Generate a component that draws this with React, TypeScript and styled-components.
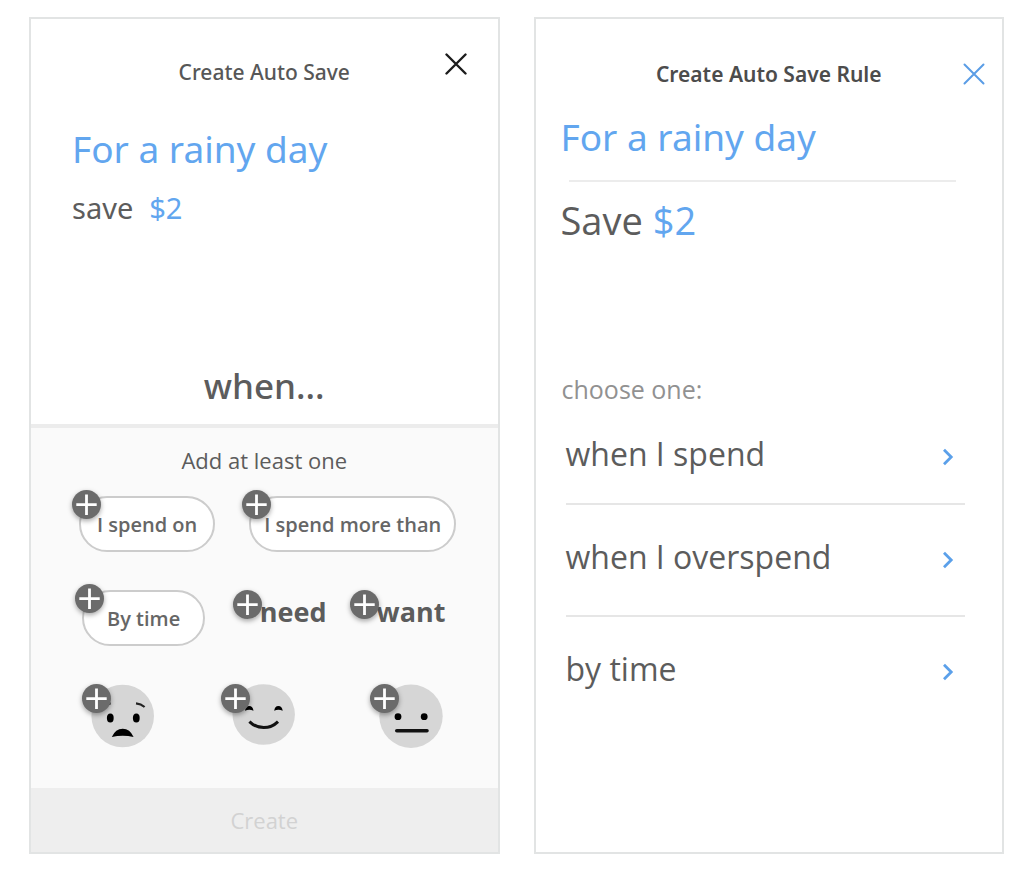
import React from "react";
import styled, { createGlobalStyle } from "styled-components";

const blue = "#62a6ef";
const ink = "#5c5c5c";
const line = "#e2e4e4";
const displayFont = `"Noto Sans", "Open Sans", sans-serif`;

const GlobalStyle = createGlobalStyle`
  *, *::before, *::after { box-sizing: border-box; }
  body {
    margin: 0;
    background: #fff;
    color: ${ink};
    font-family: "Open Sans", "Noto Sans", sans-serif;
  }
  h1, h2, p, ul { margin: 0; padding: 0; font-weight: 400; }
  ul { list-style: none; }
  button {
    margin: 0;
    padding: 0;
    border: 0;
    background: none;
    color: inherit;
    font: inherit;
    cursor: pointer;
  }
`;

const Page = styled.main`
  display: grid;
  grid-template-columns: repeat(auto-fit, minmax(420px, 1fr));
  gap: 34px;
  min-height: 100vh;
  padding: 17px 30px 26px 29px;
`;

const Panel = styled.section`
  display: flex;
  flex-direction: column;
  border: 2px solid ${line};
  background: #fff;
`;

const Header = styled.header<{ $raised?: boolean }>`
  display: grid;
  grid-template-columns: 1fr auto 1fr;
  align-items: start;
  padding: ${(p) => (p.$raised ? "31px 28px 0" : "41px 14px 0")};
`;

const Title = styled.h1<{ $strong?: boolean; $low?: boolean }>`
  grid-column: 2;
  padding-top: ${(p) => (p.$low ? 8 : 0)}px;
  font-family: ${displayFont};
  font-size: 21px;
  line-height: 28px;
  font-weight: ${(p) => (p.$strong ? 600 : 500)};
  color: ${(p) => (p.$strong ? "#4c4c4c" : "#575757")};
`;

const CloseButton = styled.button<{ $color: string }>`
  justify-self: end;
  display: flex;
  align-items: center;
  justify-content: center;
  width: 28px;
  height: 28px;
  color: ${(p) => p.$color};
`;

const Goal = styled.h2`
  font-family: ${displayFont};
  font-size: 37px;
  line-height: 48px;
  color: ${blue};
`;

const Amount = styled.span`
  color: ${blue};
`;

const RuleBody = styled.div`
  flex: 1;
  display: flex;
  flex-direction: column;
  padding: 39px 41px 14px;
`;

const SmallSave = styled.p`
  display: flex;
  gap: 16px;
  margin-top: 15px;
  font-family: ${displayFont};
  font-size: 29px;
  line-height: 40px;
`;

const When = styled.p`
  margin-top: auto;
  font-family: ${displayFont};
  font-size: 35px;
  line-height: 48px;
  font-weight: 500;
  text-align: center;
`;

const Picker = styled.div`
  display: flex;
  flex-direction: column;
  padding: 18px 0 40px;
  border-top: 4px solid #ececec;
  background: #fafafa;
`;

const PickerTitle = styled.p`
  margin-bottom: 22px;
  font-size: 22px;
  line-height: 28px;
  text-align: center;
`;

const ChipRow = styled.div<{ $gap: number; $left: number; $right: number }>`
  display: flex;
  align-items: flex-start;
  gap: ${(p) => p.$gap}px;
  padding: 0 ${(p) => p.$right}px 0 ${(p) => p.$left}px;

  & + & { margin-top: 38px; }
  & > :last-child:nth-child(3) { margin-left: auto; }
`;

const Pill = styled.button<{ $pad: number }>`
  position: relative;
  height: 56px;
  padding: 0 ${(p) => p.$pad}px;
  border: 2px solid #cccccc;
  border-radius: 28px;
  background: #fff;
  color: #666;
  font-size: 20px;
  font-weight: 600;
  white-space: nowrap;
`;

const Words = styled.div`
  display: flex;
  gap: 23px;
  margin-left: auto;
  padding-top: 4px;
`;

const Word = styled.button`
  position: relative;
  padding-left: 27px;
  font-size: 27px;
  line-height: 36px;
  font-weight: 700;
`;

const FaceButton = styled.button`
  position: relative;
  width: 64px;
  height: 64px;

  & > svg { display: block; }
`;

const BadgeDot = styled.span<{ $x: number; $y: number }>`
  position: absolute;
  left: ${(p) => p.$x}px;
  top: ${(p) => p.$y}px;
  width: 29px;
  height: 29px;
  border-radius: 50%;
  background: #6b6b6b;
  box-shadow: 0 2px 5px rgba(0, 0, 0, 0.35);

  & > svg { display: block; }
`;

const CreateButton = styled.button`
  height: 64px;
  background: #eeeeee;
  color: #d2d2d2;
  font-size: 22px;
  line-height: 28px;
`;

const Summary = styled.div`
  padding: 25px 46px 0 25px;
`;

const Rule = styled.hr`
  height: 2px;
  margin: 19px 0 14px 8px;
  border: 0;
  background: #ececec;
`;

const BigSave = styled.p`
  font-size: 38px;
  line-height: 48px;
`;

const Choose = styled.p`
  margin-top: 129px;
  padding: 0 26px;
  font-size: 25px;
  line-height: 32px;
  color: #919191;
`;

const Options = styled.ul`
  margin: 30px 37px 0 30px;
`;

const Option = styled.li`
  padding: 33px 0;

  &:first-child { padding: 0 0 24px; }
  &:not(:last-child) { border-bottom: 2px solid #e6e6e6; }
`;

const OptionButton = styled.button`
  display: flex;
  align-items: center;
  justify-content: space-between;
  width: 100%;
  height: 44px;
  padding-right: 11px;
  text-align: left;
`;

const OptionText = styled.span`
  padding-bottom: 6px;
  font-size: 32px;
  line-height: 38px;
`;

const Cross = ({ width }: { width: number }) => (
  <svg width="22" height="22" viewBox="0 0 22 22" fill="none" stroke="currentColor" strokeWidth={width} strokeLinecap="round" aria-hidden="true">
    <path d="M1.5 1.5 20.5 20.5M20.5 1.5 1.5 20.5" />
  </svg>
);

const Chevron = () => (
  <svg width="12" height="18" viewBox="0 0 12 18" fill="none" stroke="#5ba0ea" strokeWidth="2.8" aria-hidden="true">
    <path d="M2 1.8 9.2 9 2 16.2" />
  </svg>
);

const Badge = ({ x, y }: { x: number; y: number }) => (
  <BadgeDot $x={x} $y={y}>
    <svg width="29" height="29" viewBox="0 0 29 29" stroke="#fff" strokeWidth="2.8" aria-hidden="true">
      <path d="M14.5 4.5V25M4.3 14.7H24.7" />
    </svg>
  </BadgeDot>
);

const faceFill = "#d6d6d6";

const SadFace = () => (
  <svg width="64" height="64" viewBox="0 0 64 64" aria-hidden="true">
    <circle cx="31.7" cy="32" r="31.3" fill={faceFill} />
    <ellipse cx="19.3" cy="34" rx="3.4" ry="4.6" />
    <ellipse cx="45.3" cy="34" rx="3.4" ry="4.6" />
    <path d="M45 19.4Q50 20 53.6 23M19.6 19.4Q14.6 20 11 23" fill="none" stroke="#222" strokeWidth="2.2" />
    <path d="M20.8 53Q24.500 44.800 31.700 44.800T42.600 53Q31.700 50.600 20.800 53Z" />
  </svg>
);

const HappyFace = () => (
  <svg width="64" height="64" viewBox="0 0 64 64" aria-hidden="true">
    <ellipse cx="31.7" cy="30.5" rx="31.2" ry="30.3" fill={faceFill} />
    <path d="M13 26.8Q13.5 22 17.2 22T21.5 26.8Q17.2 24.8 13 26.8ZM42.2 26.8Q42.7 22 46.4 22T50.7 26.8Q46.4 24.8 42.2 26.8Z" />
    <path d="M17.4 37.6Q23.5 43.6 31.7 43.6T46 37.6" fill="none" stroke="#111" strokeWidth="3" />
  </svg>
);

const NeutralFace = () => (
  <svg width="64" height="64" viewBox="0 0 64 64" aria-hidden="true">
    <circle cx="32" cy="32.2" r="31.7" fill={faceFill} />
    <circle cx="19" cy="32.7" r="3.4" />
    <circle cx="45.2" cy="32.7" r="3.4" />
    <path d="M17.8 46.7H48" stroke="#111" strokeWidth="3.6" strokeLinecap="round" />
  </svg>
);

export default function App() {
  return (
    <>
      <GlobalStyle />
      <Page>
        <Panel>
          <Header $raised>
            <Title $low>Create Auto Save</Title>
            <CloseButton $color="#1c1c1c" aria-label="Close">
              <Cross width={2.4} />
            </CloseButton>
          </Header>
          <RuleBody>
            <Goal>For a rainy day</Goal>
            <SmallSave>
              <span>save</span>
              <Amount>$2</Amount>
            </SmallSave>
            <When>when...</When>
          </RuleBody>
          <Picker>
            <PickerTitle>Add at least one</PickerTitle>
            <ChipRow $gap={34} $left={48} $right={43}>
              <Pill $pad={16}>I spend on<Badge x={-9} y={-8} /></Pill>
              <Pill $pad={13}>I spend more than<Badge x={-9} y={-8} /></Pill>
            </ChipRow>
            <ChipRow $gap={20} $left={51} $right={52}>
              <Pill $pad={23}>By time<Badge x={-9} y={-8} /></Pill>
              <Words>
                <Word>need<Badge x={0} y={-4} /></Word>
                <Word>want<Badge x={0} y={-4} /></Word>
              </Words>
            </ChipRow>
            <ChipRow $gap={77} $left={60} $right={55}>
              <FaceButton aria-label="Sad"><SadFace /><Badge x={-9} y={0} /></FaceButton>
              <FaceButton aria-label="Happy"><HappyFace /><Badge x={-11} y={0} /></FaceButton>
              <FaceButton aria-label="Neutral"><NeutralFace /><Badge x={-9} y={0} /></FaceButton>
            </ChipRow>
          </Picker>
          <CreateButton>Create</CreateButton>
        </Panel>

        <Panel>
          <Header>
            <Title $strong>Create Auto Save Rule</Title>
            <CloseButton $color="#5a9de6" aria-label="Close">
              <Cross width={2} />
            </CloseButton>
          </Header>
          <Summary>
            <Goal>For a rainy day</Goal>
            <Rule />
            <BigSave>Save <Amount>$2</Amount></BigSave>
          </Summary>
          <Choose>choose one:</Choose>
          <Options>
            {["when I spend", "when I overspend", "by time"].map((label) => (
              <Option key={label}>
                <OptionButton>
                  <OptionText>{label}</OptionText>
                  <Chevron />
                </OptionButton>
              </Option>
            ))}
          </Options>
        </Panel>
      </Page>
    </>
  );
}
